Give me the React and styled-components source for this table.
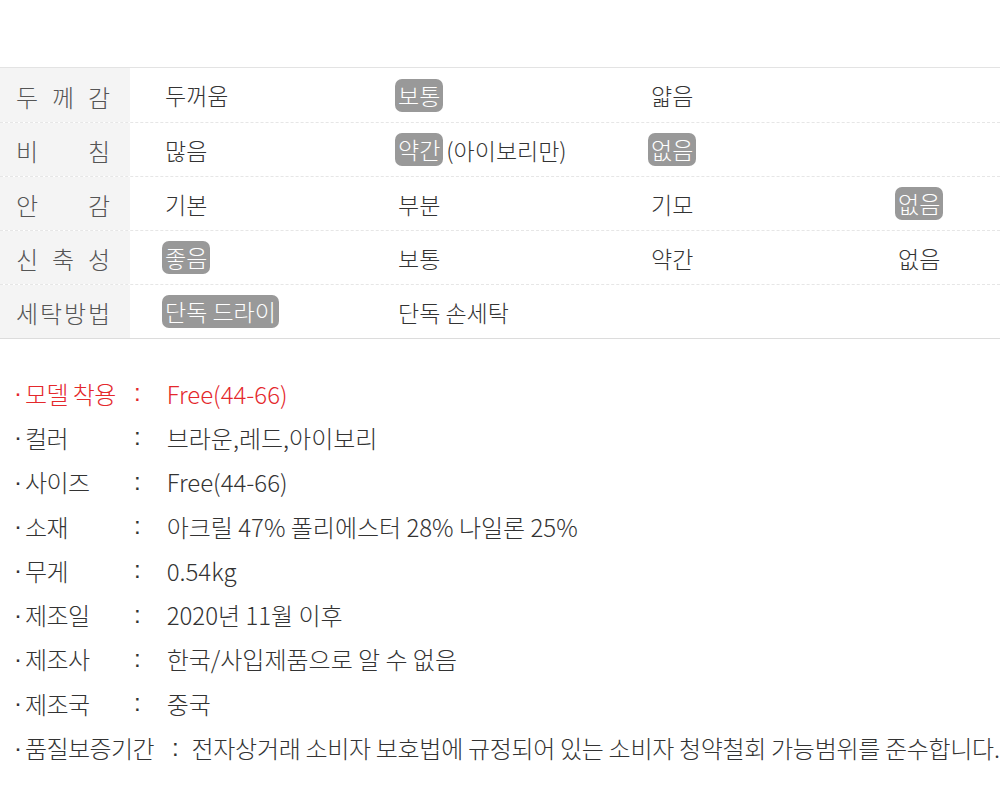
import React from "react";
import styled, { createGlobalStyle } from "styled-components";

const GlobalStyle = createGlobalStyle`
body {
    margin: 0;
    background: #fff;
    font-family: "Noto Sans CJK KR", "Noto Sans", sans-serif;
}
`

const Page = styled.div`
width: 1000px;
padding-top: 67px;
`

const Table = styled.div`
border-top: 1px solid #e3e3e3;
border-bottom: 1px solid #dcdcdc;
`

const Row = styled.div`
display: flex;
height: ${props => props.first ? '54px' : '53px'};
border-top: ${props => props.first ? 'none' : '1px dashed #e6e6e6'};
`

const Label = styled.div`
width: 130px;
flex-shrink: 0;
box-sizing: border-box;
padding: 2px 20px 0 16px;
background: #f4f4f4;
display: flex;
align-items: center;
justify-content: space-between;
font-size: 24px;
font-weight: 300;
color: #555;
`

const Cells = styled.div`
flex: 1;
display: grid;
grid-template-columns: 233px 253px 247px 1fr;
padding: 0 0 0 35px;
align-items: center;
`

const Cell = styled.div`
display: flex;
align-items: center;
font-size: 23px;
font-weight: 300;
color: #333;
white-space: nowrap;
`

const Badge = styled.span`
display: inline-block;
margin-left: -3px;
padding: 0 3px;
height: 33px;
line-height: 32px;
border-radius: 7px;
background: #999;
color: #fff;
`

const Extra = styled.span`
margin-left: 3px;
`

const Info = styled.ul`
list-style: none;
margin: 0;
padding: 32px 0 0 14px;
`

const Item = styled.li`
display: flex;
height: 44.3px;
align-items: center;
font-size: 24px;
font-weight: 300;
color: ${props => props.red ? '#e4282c' : '#333'};
white-space: nowrap;
`

const Bullet = styled.span`
flex-shrink: 0;
font-family: "Liberation Sans", sans-serif;
margin-right: 3px;
`

const Name = styled.span`
flex-shrink: 0;
min-width: 95px;
letter-spacing: -0.6px;
`

const Colon = styled.span`
flex-shrink: 0;
font-family: "Liberation Sans", sans-serif;
margin: ${props => props.long ? '0 13px 0 18px' : '0 26px 0 14px'};
`

const Value = styled.span`
letter-spacing: ${props => props.long ? '-0.3px' : '0'};
`

const spec = [
    { label: ['두', '께', '감'], cells: [{ t: '두꺼움' }, { t: '보통', on: true }, { t: '얇음' }] },
    { label: ['비', '침'], cells: [{ t: '많음' }, { t: '약간', on: true, extra: '(아이보리만)' }, { t: '없음', on: true }] },
    { label: ['안', '감'], cells: [{ t: '기본' }, { t: '부분' }, { t: '기모' }, { t: '없음', on: true }] },
    { label: ['신', '축', '성'], cells: [{ t: '좋음', on: true }, { t: '보통' }, { t: '약간' }, { t: '없음' }] },
    { label: ['세', '탁', '방', '법'], cells: [{ t: '단독 드라이', on: true }, { t: '단독 손세탁' }] },
]

const info = [
    { name: '모델 착용', value: 'Free(44-66)', red: true },
    { name: '컬러', value: '브라운,레드,아이보리' },
    { name: '사이즈', value: 'Free(44-66)' },
    { name: '소재', value: '아크릴 47% 폴리에스터 28% 나일론 25%' },
    { name: '무게', value: '0.54kg' },
    { name: '제조일', value: '2020년 11월 이후' },
    { name: '제조사', value: '한국/사입제품으로 알 수 없음' },
    { name: '제조국', value: '중국' },
    { name: '품질보증기간', value: '전자상거래 소비자 보호법에 규정되어 있는 소비자 청약철회 가능범위를 준수합니다.', long: true },
]

const App = () => {
    return (
        <Page>
            <GlobalStyle />
            <Table>
                {spec.map((row, i) => (
                    <Row key={i} first={i === 0}>
                        <Label>
                            {row.label.map((c, j) => <span key={j}>{c}</span>)}
                        </Label>
                        <Cells>
                            {row.cells.map((c, j) => (
                                <Cell key={j}>
                                    {c.on ? <Badge>{c.t}</Badge> : c.t}
                                    {c.extra && <Extra>{c.extra}</Extra>}
                                </Cell>
                            ))}
                        </Cells>
                    </Row>
                ))}
            </Table>
            <Info>
                {info.map((it, i) => (
                    <Item key={i} red={it.red}>
                        <Bullet>·</Bullet>
                        <Name>{it.name}</Name>
                        <Colon long={it.long}>:</Colon>
                        <Value long={it.long}>{it.value}</Value>
                    </Item>
                ))}
            </Info>
        </Page>
    )
}

export default App;
